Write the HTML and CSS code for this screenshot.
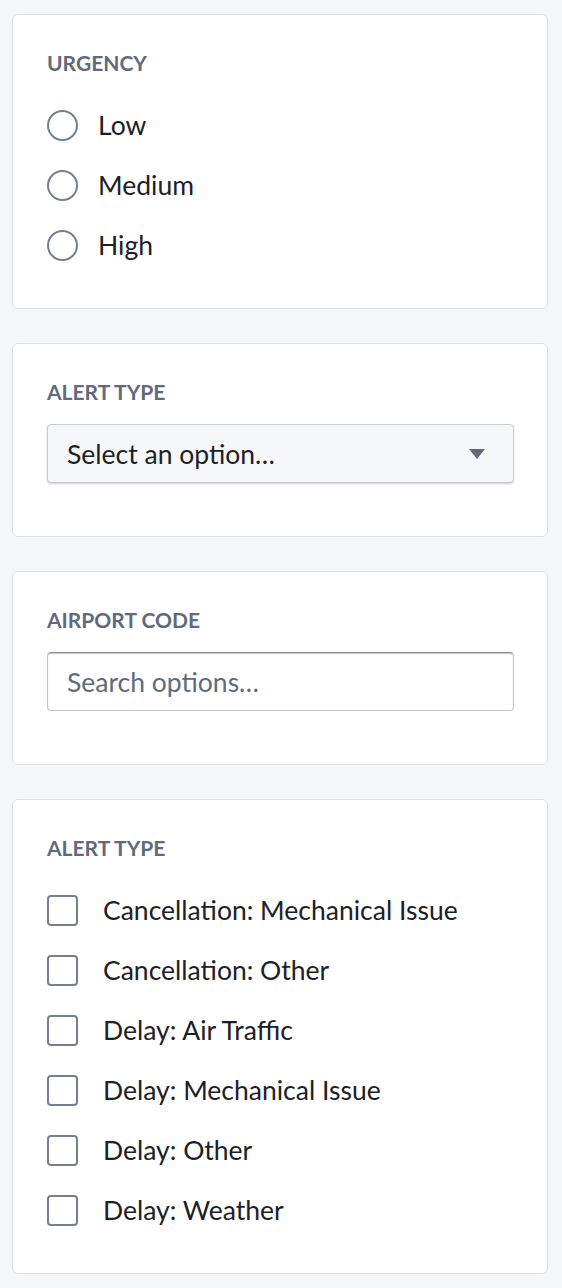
FILE: index.html
```html
<!DOCTYPE html>
<html lang="en">
<head>
    <meta charset="UTF-8">
    <meta name="viewport" content="width=device-width, initial-scale=1.0">
    <title>Alert Filters</title>
    <link rel="stylesheet" href="styles.css">
</head>
<body>
    <div class="filters">
        <section class="card">
            <h2 class="label">URGENCY</h2>
            <ul class="options">
                <li class="option"><span class="radio"></span>Low</li>
                <li class="option"><span class="radio"></span>Medium</li>
                <li class="option"><span class="radio"></span>High</li>
            </ul>
        </section>

        <section class="card">
            <h2 class="label">ALERT TYPE</h2>
            <div class="field">
                <div class="select">
                    <span>Select an option…</span>
                    <svg class="caret" width="16" height="10" viewBox="0 0 16 10">
                        <path d="M0 0h16L8 10z" fill="#5f6b7c"/>
                    </svg>
                </div>
            </div>
        </section>

        <section class="card">
            <h2 class="label">AIRPORT CODE</h2>
            <div class="field">
                <input class="search" type="text" placeholder="Search options…">
            </div>
        </section>

        <section class="card">
            <h2 class="label">ALERT TYPE</h2>
            <ul class="options">
                <li class="option"><span class="box"></span>Cancellation: Mechanical Issue</li>
                <li class="option"><span class="box"></span>Cancellation: Other</li>
                <li class="option"><span class="box"></span>Delay: Air Traffic</li>
                <li class="option"><span class="box"></span>Delay: Mechanical Issue</li>
                <li class="option"><span class="box"></span>Delay: Other</li>
                <li class="option"><span class="box"></span>Delay: Weather</li>
            </ul>
        </section>
    </div>
</body>
</html>
```

FILE: styles.css
```css
body {
    margin: 0;
    background: #f5f6f8;
    font-family: Lato, "Liberation Sans", sans-serif;
    color: #1c2127;
}

.filters {
    display: flex;
    flex-direction: column;
    gap: 34px;
    padding: 14px 14px 18px 12px;
}

.card {
    background: white;
    border: 1px solid #dcdfe3;
    border-radius: 6px;
    padding: 32px 33px 33px 34px;
}

.label {
    margin: 0 0 16px;
    font-size: 21px;
    line-height: 32px;
    font-weight: bold;
    color: #5f6b7c;
}

.options {
    list-style: none;
    margin: 0;
    padding: 0;
}

.option {
    display: flex;
    align-items: center;
    height: 60px;
    font-size: 26.5px;
}

.radio {
    width: 31px;
    height: 31px;
    box-sizing: border-box;
    border: 2px solid #738091;
    border-radius: 50%;
    margin-right: 20px;
}

.box {
    width: 31px;
    height: 31px;
    box-sizing: border-box;
    border: 2px solid #738091;
    border-radius: 4px;
    margin-right: 25px;
}

.field {
    margin-bottom: 20px;
}

.select {
    display: flex;
    align-items: center;
    justify-content: space-between;
    height: 59px;
    box-sizing: border-box;
    padding: 0 28px 0 19px;
    background: #f6f7f9;
    border: 1px solid #c9ccd1;
    border-radius: 4px;
    box-shadow: 0 1px 2px rgba(17, 20, 24, 0.2);
    font-size: 26.5px;
}

.search {
    display: block;
    width: 100%;
    height: 59px;
    box-sizing: border-box;
    padding: 0 19px;
    border: 1px solid #c3c6ca;
    border-top-color: #8a8d91;
    border-radius: 4px;
    box-shadow: inset 0 1px 1px rgba(17, 20, 24, 0.25);
    font-family: inherit;
    font-size: 26.5px;
    color: #1c2127;
    outline: none;
}

.search::placeholder {
    color: #5f6b7c;
}
```
